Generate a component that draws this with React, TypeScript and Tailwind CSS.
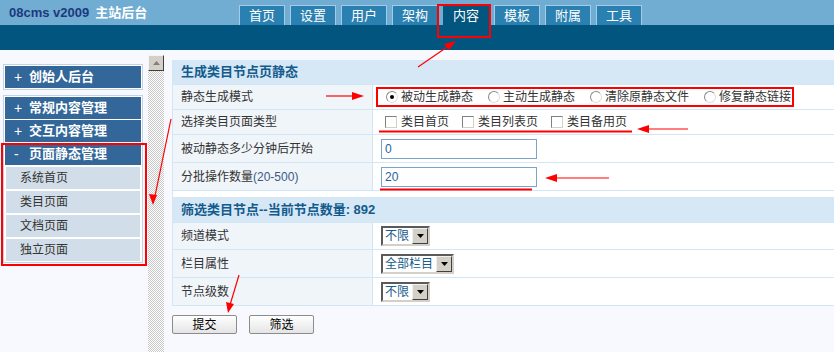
import React from "react";

const F = { fontFamily: '"Liberation Sans", "Noto Sans CJK SC", sans-serif' } as React.CSSProperties;

function Radio({ checked }: { checked?: boolean }) {
  return (
    <span className="relative inline-flex w-[12px] h-[12px] rounded-full border border-[#8a8a8a] border-r-[#e0e0e0] border-b-[#e0e0e0] bg-white items-center justify-center shrink-0">
      {checked && <span className="w-[4px] h-[4px] rounded-full bg-black" />}
    </span>
  );
}

function Check() {
  return <span className="inline-block w-[12px] h-[12px] border border-[#808080] border-r-[#d4d0c8] border-b-[#d4d0c8] bg-white shrink-0" />;
}

function Select({ text, w }: { text: string; w: number }) {
  return (
    <div
      className="flex h-[20px] border-2 border-t-[#5a5a5a] border-l-[#5a5a5a] border-b-[#d4d0c8] border-r-[#d4d0c8] bg-white"
      style={{ width: w }}
    >
      <div className="flex-1 text-[12px] leading-[16px] text-[#155a8a] pl-[2px] overflow-hidden">{text}</div>
      <div className="w-[16px] h-[16px] bg-[#d4d0c8] border border-t-[#f0f0f0] border-l-[#f0f0f0] border-b-[#404040] border-r-[#404040] flex items-center justify-center">
        <svg width="7" height="4" viewBox="0 0 7 4"><path d="M0 0h7L3.5 4z" fill="#000" /></svg>
      </div>
    </div>
  );
}

function Row({ label, h, children }: { label: React.ReactNode; h: number; children?: React.ReactNode }) {
  return (
    <div className="flex border-b border-[#d2e6f5]" style={{ height: h }}>
      <div className="w-[200px] shrink-0 bg-[#f0f5fa] border-r border-[#d2e6f5] pl-[8px] flex items-center text-[12px] text-[#333]">
        {label}
      </div>
      <div className="flex-1 bg-white pl-[8px] flex items-center text-[12px] text-[#333]">{children}</div>
    </div>
  );
}

function Head({ children, h }: { children: React.ReactNode; h: number }) {
  return (
    <div className="bg-[#d6e7f6] border-b border-[#d2e6f5] pl-[8px] flex items-center text-[13px] font-bold text-[#135b8c]" style={{ height: h }}>
      {children}
    </div>
  );
}

function Input({ v }: { v: string }) {
  return (
    <div className="w-[156px] h-[20px] border border-[#7aa3cf] bg-white text-[12px] leading-[18px] text-[#1f5f9f] pl-[3px]">{v}</div>
  );
}

function DarkItem({ sign, text }: { sign: string; text: string }) {
  return (
    <div className="h-[22px] bg-[#336699] text-white font-bold text-[13px] flex items-center pl-[9px]">
      <span className="w-[15px] font-normal text-[14px]">{sign}</span>
      <span>{text}</span>
    </div>
  );
}

function SubItem({ text }: { text: string }) {
  return <div className="h-[22px] mx-[1px] bg-[#d1dee9] text-[#333] text-[12px] flex items-center pl-[14px]">{text}</div>;
}

export default function App() {
  const tabs = ["首页", "设置", "用户", "架构", "内容", "模板", "附属", "工具"];
  return (
    <div className="relative w-[834px] h-[352px] overflow-hidden bg-[#f8f8ff]" style={F}>
      {/* header */}
      <div className="h-[25px] bg-[#71acd2] flex items-end">
        <div className="self-start pt-[3px] pl-[9px] w-[239px] text-[13px] font-bold flex gap-[6px]">
          <span className="text-[#1b3a7e]">08cms v2009</span>
          <span className="text-white">主站后台</span>
        </div>
        <div className="flex gap-[5px]">
          {tabs.map((t) => (
            <div
              key={t}
              className={
                "w-[46px] h-[20px] flex items-center justify-center text-white text-[13px] border border-b-0 " +
                (t === "内容" ? "bg-[#02557f] border-[#02557f]" : "bg-[#2a80b0] border-[#a3cce6]")
              }
            >
              {t}
            </div>
          ))}
        </div>
      </div>
      <div className="h-[25px] bg-[#02557f]" />

      {/* body */}
      <div className="flex h-[302px]">
        {/* sidebar */}
        <div className="w-[148px] pt-[14px] pl-[3px]">
          <div className="w-[140px] border border-[#c3d3e2] p-[1px] bg-white">
            <DarkItem sign="+" text="创始人后台" />
          </div>
          <div className="mt-[5px] w-[140px] border border-[#c3d3e2] p-[1px] bg-white flex flex-col">
            <DarkItem sign="+" text="常规内容管理" />
            <div className="h-[1px]" />
            <DarkItem sign="+" text="交互内容管理" />
            <div className="h-[1px]" />
            <DarkItem sign="-" text="页面静态管理" />
            <div className="flex flex-col gap-[2px] pt-[2px]">
              <SubItem text="系统首页" />
              <SubItem text="类目页面" />
              <SubItem text="文档页面" />
              <SubItem text="独立页面" />
            </div>
          </div>
        </div>

        {/* scrollbar */}
        <div className="w-[16px] flex flex-col pt-[5px]">
          <div className="h-[16px] bg-[#d4d0c8] border border-t-[#f4f4f4] border-l-[#f4f4f4] border-b-[#404040] border-r-[#404040] flex items-center justify-center">
            <svg width="7" height="4" viewBox="0 0 7 4"><path d="M3.5 0L7 4H0z" fill="#808080" /></svg>
          </div>
          <div className="flex-1 bg-[repeating-conic-gradient(#c8c8c8_0_25%,#ffffff_0_50%)] bg-[length:2px_2px]" />
        </div>

        {/* main */}
        <div className="flex-1 pl-[8px] pt-[10px]">
          <div className="border-l border-[#d2e6f5]">
            <Head h={25}>生成类目节点页静态</Head>
            <Row label="静态生成模式" h={25}>
              <div className="flex items-center pl-[5px]">
                {["被动生成静态", "主动生成静态", "清除原静态文件", "修复静态链接"].map((t, i) => (
                  <div key={t} className={"flex items-center gap-[3px] " + (i > 0 ? "ml-[15px]" : "")}>
                    <Radio checked={i === 0} />
                    <span>{t}</span>
                  </div>
                ))}
              </div>
            </Row>
            <Row label="选择类目页面类型" h={25}>
              <div className="flex items-center pl-[4px]">
                {["类目首页", "类目列表页", "类目备用页"].map((t, i) => (
                  <div key={t} className={"flex items-center gap-[4px] " + (i > 0 ? "ml-[13px]" : "")}>
                    <Check />
                    <span>{t}</span>
                  </div>
                ))}
              </div>
            </Row>
            <Row label="被动静态多少分钟后开始" h={28}>
              <Input v="0" />
            </Row>
            <Row
              label={
                <span>
                  分批操作数量<span className="text-[#3a5a85]">(20-500)</span>
                </span>
              }
              h={28}
            >
              <Input v="20" />
            </Row>
            <div className="h-[6px] bg-white" />
            <Head h={26}>筛选类目节点--当前节点数量: 892</Head>
            <Row label="频道模式" h={27}>
              <Select text="不限" w={49} />
            </Row>
            <Row label="栏目属性" h={28}>
              <Select text="全部栏目" w={73} />
            </Row>
            <Row label="节点级数" h={28}>
              <Select text="不限" w={49} />
            </Row>
          </div>
          <div className="flex gap-[12px] mt-[9px]">
            {["提交", "筛选"].map((t) => (
              <div
                key={t}
                className="w-[65px] h-[19px] rounded-[2px] border border-[#8c8c8c] bg-gradient-to-b from-[#ffffff] to-[#e4e4e4] text-[12px] text-black flex items-center justify-center"
              >
                {t}
              </div>
            ))}
          </div>
        </div>
      </div>

      {/* red annotations */}
      <div className="absolute left-[437px] top-[4px] w-[54px] h-[34px] border-2 border-[#ff0000]" />
      <div className="absolute left-[1px] top-[143px] w-[146px] h-[123px] border-2 border-[#ff0000]" />
      <div className="absolute left-[376px] top-[87px] w-[418px] h-[20px] border-2 border-[#ff0000]" />
      <svg className="absolute left-0 top-0 pointer-events-none" width="834" height="352" viewBox="0 0 834 352">
        <g stroke="#ff0000" strokeWidth="1.2" fill="none">
          <line x1="418" y1="67" x2="450" y2="45" />
          <line x1="326" y1="96" x2="354" y2="96" />
          <line x1="688" y1="129" x2="647" y2="129" />
          <line x1="609" y1="178" x2="555" y2="178" />
          <line x1="171" y1="119" x2="155" y2="196" />
          <line x1="239" y1="275" x2="230" y2="305" />
        </g>
        <g fill="#ff0000">
          <polygon points="456,41 444,44 449,50" />
          <polygon points="364,96 352,92 352,100" />
          <polygon points="637,129 649,125 649,133" />
          <polygon points="545,178 557,174 557,182" />
          <polygon points="153,205 149,194 157,195" />
          <polygon points="228,313 226,302 234,304" />
          <rect x="379" y="130.5" width="253" height="2" />
          <rect x="380" y="188.5" width="152" height="2" />
        </g>
      </svg>
    </div>
  );
}
